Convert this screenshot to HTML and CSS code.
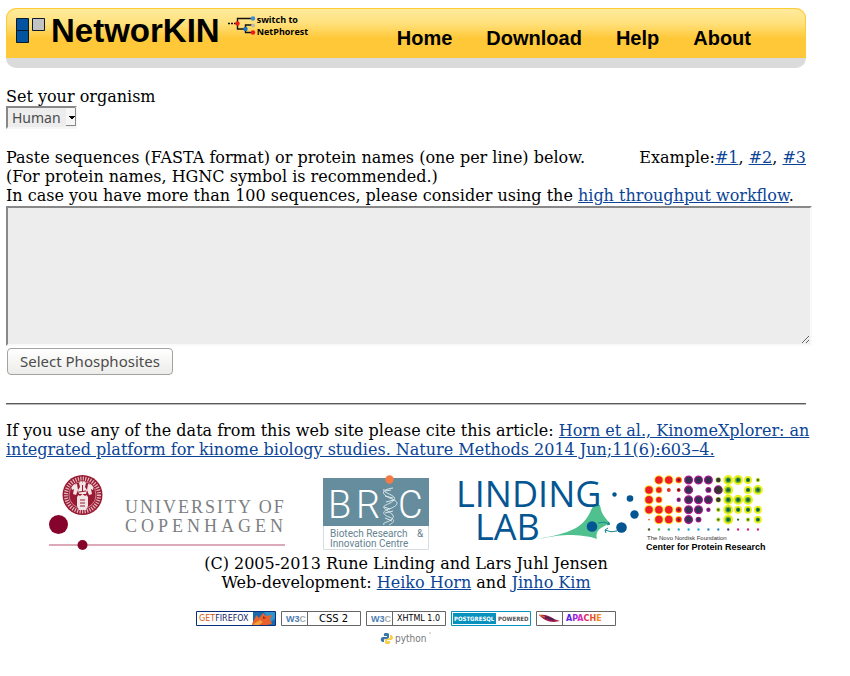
FILE: index.html
```html
<!DOCTYPE html>
<html lang="en">
<head>
<meta charset="utf-8">
<title>NetworKIN</title>
<link rel="stylesheet" href="styles.css">
</head>
<body>
<div class="page">
  <header class="banner">
    <a class="brand" href="#">
      <svg class="brand-mark" width="30" height="26" viewBox="0 0 30 26" aria-hidden="true">
        <g stroke="#0b1a2b"><path fill="#0354a0" d="M.5.5h12v12H.5zM.5 12.5h12v12H.5z"/><path fill="#c3c3c3" d="M16.5.5h12v12h-12z"/></g>
      </svg>
      <span>NetworKIN</span>
    </a>
    <a class="switch" href="#">
      <svg width="28" height="20" viewBox="0 0 28 20" aria-hidden="true">
        <path d="M0 7.5h8" stroke="#111" stroke-width="1.6" stroke-dasharray="2 1"/>
        <path d="M25 2.500H9.500V13H17M25 9h-7.500v7.500H25" fill="none" stroke="#111" stroke-width="1.400"/>
        <circle cx="9.500" cy="7.500" r="2.200" fill="#f01818"/><circle cx="25" cy="2.500" r="2.200" fill="#3a8fd8"/>
        <circle cx="25" cy="9.500" r="2" fill="#b9b9a8"/><circle cx="17.500" cy="13" r="2.200" fill="#1673cc"/>
        <circle cx="25" cy="16.500" r="2.200" fill="#f01818"/>
      </svg>
      <span>switch to<br>NetPhorest</span>
    </a>
    <nav class="menu">
      <a href="#">Home</a><a href="#">Download</a><a href="#">Help</a><a href="#">About</a>
    </nav>
  </header>

  <main>
    <form class="query">
      <label for="organism">Set your organism</label>
      <div class="picker">
        <select id="organism"><option>Human</option><option>Yeast</option></select>
      </div>
      <div class="intro">
        <label for="sequences">Paste sequences (FASTA format) or protein names (one per line) below.</label>
        <span>Example:<a href="#">#1</a>, <a href="#">#2</a>, <a href="#">#3</a></span>
      </div>
      <div>(For protein names, HGNC symbol is recommended.)</div>
      <div>In case you have more than 100 sequences, please consider using the <a href="#">high throughput workflow</a>.</div>
      <textarea id="sequences"></textarea>
      <button type="button">Select Phosphosites</button>
    </form>
    <hr>
    <p class="cite">If you use any of the data from this web site please cite this article: <a href="#">Horn et al., KinomeXplorer: an<br>integrated platform for kinome biology studies. Nature Methods 2014 Jun;11(6):603–4.</a></p>
  </main>

  <footer>
    <div class="logos">
      <svg width="256" height="80" viewBox="0 0 256 80" role="img" aria-label="University of Copenhagen">
        <path d="M1 72h236" stroke="#dba9b8" stroke-width="2"/>
        <circle cx="10.500" cy="51.500" r="9.500" fill="#86042b"/><circle cx="34.500" cy="72" r="5" fill="#86042b"/>
        <circle cx="34.500" cy="22" r="20" fill="#991a32"/>
        <circle cx="34.500" cy="22" r="16.500" fill="none" stroke="#e3b9bf" stroke-width="4" stroke-dasharray="1.200 1.300"/>
        <circle cx="34.500" cy="22" r="13.500" fill="#991a32" stroke="#e9cdd0" stroke-width=".6"/>
        <g fill="#f3e4e5">
          <path d="M29 24l1.500-2 1.500 1 2.500-2 2.500 2 1.500-1L40 24v9l-2 4h-7l-2-4z"/>
          <path d="M31 10l2-2 1.500 1.500L36 8l2 2-1 4 2 3-1 4h-7l-1-4 2-3z"/>
          <path d="M29 11c-4 0-6 3-5 6l2-1-1 5 3 1 2-5zM40 11c4 0 6 3 5 6l-2-1 1 5-3 1-2-5z"/>
        </g>
        <path d="M32 27h5M32 30h5M32 33h5M34.500 12v6M31 19l7-1" stroke="#991a32" stroke-width="1"/>
        <text class="ucph ucph-top" x="77" y="40">UNIVERSITY OF</text>
        <text class="ucph ucph-bottom" x="77" y="59">COPENHAGEN</text>
      </svg>
      <svg width="140" height="80" viewBox="0 0 140 80" role="img" aria-label="BRIC">
        <path d="M19.500 5.500h105v71h-105z" fill="#fff" stroke="#d5dfe2"/>
        <path d="M19 5h106v48H19z" fill="#668d9d"/>
        <circle cx="85.500" cy="6.500" r="4.200" fill="#f47b43"/>
        <g fill="none" stroke="#dce8eb" stroke-width="1">
          <path d="M89 15c-14 2-11 7-1 11s3 8-3 10-8 5 0 8 4 6 0 8"/>
          <path d="M80 16c-3 4 14 6 10 11s-14 5-9 9 11 6 7 10-10 3-8 6"/>
          <path d="M81 18l6-1M81 23l8 2M82 29l8-2M80 34l6 2M81 40l8-2M81 45l7 3"/>
        </g>
        <text class="bric" y="45"><tspan x="24">B</tspan><tspan x="52">R</tspan><tspan x="94">C</tspan></text>
        <text class="bric-sub" y="64"><tspan x="26">Biotech Research</tspan><tspan x="113">&amp;</tspan></text>
        <text class="bric-sub" x="26" y="74">Innovation Centre</text>
      </svg>
      <svg width="197" height="80" viewBox="0 0 197 80" role="img" aria-label="Linding Lab">
        <path d="M92 66c25-4 41-8 50-20 5-6 5-12 9-14h5c1 6 2 10 10 18l-9 5c-5 3-5 8-4 11-8-3-18-4-29-4-12 0-21 3-32 4z" fill="#50c18e"/>
        <g fill="#045693"><circle cx="148" cy="53.500" r="5.300"/><circle cx="177.500" cy="54.500" r="5.300"/><circle cx="190.500" cy="41.500" r="4.200"/><circle cx="186" cy="25.500" r="3.300"/><circle cx="170.500" cy="21.500" r="2.200"/></g>
        <path d="M154 50q6-2 12 1m-2-2l2 2-3 1M173 58q-6 2-12-1m3-2l-3 2 1 3" fill="none" stroke="#178a91"/>
        <text class="lab" x="12" y="34">LINDING</text>
        <text class="lab" x="31" y="67">LAB</text>
      </svg>
      <svg width="124" height="80" viewBox="0 0 124 80" role="img" aria-label="Center for Protein Research">
        <!-- One unit per dot column; each zero-length segment draws a round dot. -->
        <g transform="translate(8 7) scale(9.900)" fill="none" stroke-linecap="round">
          <path stroke="#fbe52c" stroke-width=".96" d="M1 0h0M2 0h0M0 1h0M0 2h0M0 3h0M1 3h0M2 3h0M1 4h0M2 4h0"/>
          <path stroke="#ee1c25" stroke-width=".76" d="M1 0h0M2 0h0M0 1h0M0 2h0M0 3h0M1 3h0M2 3h0M1 4h0M2 4h0"/>
          <path stroke="#fbd52c" stroke-width=".72" d="M3 0h0M1 1h0M1 2h0M3 3h0M3 4h0"/>
          <path stroke="#ee1c25" stroke-width=".56" d="M3 0h0M1 1h0M1 2h0M3 3h0M3 4h0"/>
          <path stroke="#e4322b" stroke-width=".4" d="M2 1h0M3 1h0"/>
          <path stroke="#5b1a2b" stroke-width=".24" d="M3 0h0M3 1h0M3 3h0M3 4h0"/>
          <path stroke="#b01b94" stroke-width=".92" d="M4 0h0M5 0h0M6 0h0M4 1h0M4 2h0M5 2h0M6 2h0M4 3h0M5 3h0M4 4h0M7 1h0"/>
          <path stroke="#343250" stroke-width=".66" d="M4 0h0M5 0h0M6 0h0M4 1h0M4 2h0M5 2h0M6 2h0M4 3h0M5 3h0M4 4h0"/>
          <path stroke="#b01b94" stroke-width=".6" d="M6 1h0M5 4h0"/>
          <path stroke="#b01b94" stroke-width=".44" d="M3 2h0M6 3h0"/>
          <path stroke="#343250" stroke-width=".4" d="M6 1h0M5 4h0"/>
          <path stroke="#343250" stroke-width=".24" d="M3 2h0M6 3h0"/>
          <path stroke="#343434" stroke-width=".74" d="M7 1h0"/>
          <path stroke="#b8c62b" stroke-width=".56" d="M7 0h0M7 2h0"/>
          <path stroke="#343434" stroke-width=".44" d="M7 0h0M7 2h0"/>
          <path stroke="#e9f01c" stroke-width="1" d="M8 0h0M9 0h0M8 1h0M11 1h0M8 2h0M9 2h0M10 2h0M8 3h0M8 4h0"/>
          <path stroke="#e9f01c" stroke-width=".8" d="M10 0h0M10 1h0M9 3h0M10 3h0M11 3h0M11 4h0"/>
          <path stroke="#58a834" stroke-width=".58" d="M8 0h0M9 0h0M8 1h0M11 1h0M8 2h0M9 2h0M10 2h0M8 3h0M8 4h0"/>
          <path stroke="#58a834" stroke-width=".44" d="M10 0h0M10 1h0M9 3h0M10 3h0M11 3h0M11 4h0"/>
          <path stroke="#135e4b" stroke-width=".34" d="M8 0h0M9 0h0M10 0h0M8 1h0M10 1h0M11 1h0M8 2h0M9 2h0M10 2h0M8 3h0M9 3h0M10 3h0M11 3h0M8 4h0M11 4h0"/>
          <path stroke="#c8de2b" stroke-width=".44" d="M11 0h0M7 3h0M7 4h0M10 4h0"/>
          <path stroke="#32702d" stroke-width=".24" d="M11 0h0M7 3h0M7 4h0M10 4h0M9 4h0"/>
          <path stroke="#e8622b" stroke-width=".18" d="M0 4h0"/>
          <g stroke-width=".24">
            <path stroke="#5a5420" d="M0 5h0"/><path stroke="#52b23c" d="M1 5h0"/><path stroke="#19a878" d="M2 5h0"/>
            <path stroke="#22a7d6" d="M3 5h0M4 5h0M5 5h0"/><path stroke="#2886c6" d="M6 5h0M7 5h0"/>
            <path stroke="#473a8f" d="M8 5h0"/><path stroke="#dc1d84" d="M9 5h0M10 5h0M11 5h0"/>
          </g>
        </g>
        <text class="cpr" x="6" y="67">The Novo Nordisk Foundation</text>
        <text class="cpr-name" x="5" y="77">Center for Protein Research</text>
      </svg>
    </div>
    <div>(C) 2005-2013 Rune Linding and Lars Juhl Jensen</div>
    <div>Web-development: <a href="#">Heiko Horn</a> and <a href="#">Jinho Kim</a></div>

    <div class="badges">
      <a href="#"><svg width="80" height="15" viewBox="0 0 80 15">
        <path d="M.5.5h79v14H.5z" fill="#fff" stroke="#0a2d7a"/>
        <path d="M57 1h22v13H57z" fill="#1769ad"/><path d="M68 1h11v7l-6 4z" fill="#2f93cc"/>
        <path d="M56 14c1-5 3-5 4-10l3 3 4-5 3 3 6-1-2 4 2 5-5 1z" fill="#e8602b"/><path d="M57 14c2-3 5-3 7-5l3 2-4 3z" fill="#f4a13c"/><path d="M67 5l3 2-3 1z" fill="#8e301a"/>
        <text class="pixel" x="3" y="10"><tspan fill="#d95a10">GET</tspan><tspan fill="#15246c">FIREFOX</tspan></text></svg></a>
      <a href="#"><svg width="80" height="15" viewBox="0 0 80 15">
        <path d="M.5.5h79v14H.5zM26.500 0v15" fill="#fff" stroke="#666"/>
        <text class="w3" x="5" y="11">W3<tspan fill="#aaa">C</tspan></text>
        <text class="pixel-wide" x="38" y="11">CSS 2</text></svg></a>
      <a href="#"><svg width="80" height="15" viewBox="0 0 80 15">
        <path d="M.5.5h79v14H.5zM26.500 0v15" fill="#fff" stroke="#666"/>
        <text class="w3" x="5" y="11">W3<tspan fill="#aaa">C</tspan></text>
        <text class="pixel" x="31" y="10">XHTML 1.0</text></svg></a>
      <a href="#"><svg width="80" height="15" viewBox="0 0 80 15">
        <path d="M.5.5h79v14H.5z" fill="#fff" stroke="#0792bd"/><path d="M2 2h43v11H2z" fill="#0792bd"/>
        <text class="pixel-mini" x="3" y="10" fill="#fff">POSTGRESQL</text>
        <text class="pixel-mini" x="47" y="10" fill="#555">POWERED</text></svg></a>
      <a href="#"><svg width="80" height="15" viewBox="0 0 80 15">
        <path d="M.5.5h79v14H.5zM26.500 0v15" fill="#fff" stroke="#666"/>
        <path d="M3 4c6-1 11 1 15 4l6 2-6 1C11 11 7 8 3 4z" fill="#a51e46"/><path d="M9 6l9 3" stroke="#4b2259" stroke-width="2"/><path d="M3 4l6 2" stroke="#e0702a"/>
        <text class="pixel pixel-bold" x="30" y="10"><tspan fill="#5a24dc">A</tspan><tspan fill="#9d25dc">P</tspan><tspan fill="#dc25bd">A</tspan><tspan fill="#e0255f">C</tspan><tspan fill="#e8502a">H</tspan><tspan fill="#f28a1e">E</tspan></text></svg></a>
    </div>
    <a class="python" href="#"><svg width="52" height="15" viewBox="0 0 52 15">
      <path d="M6 2c-3 0-2 2-2 3h3v1H3c-3 0-3 5 0 5h1V9c0-2 5 0 5-3V3c0-1-2-1-3-1z" fill="#3b76aa"/>
      <path d="M8 13c3 0 2-2 2-3H7V9h4c3 0 2-5 0-5h-1v2c0 3-5 1-5 3v3c0 1 2 1 3 1z" fill="#fbcf45"/>
      <text x="15" y="11">python</text><path d="M49 2h2" stroke="#bbb"/></svg></a>
  </footer>
</div>
</body>
</html>
```

FILE: styles.css
```css
body {
  margin: 8px 6px;
  background: #fff;
  color: #000;
  font: 16px/19px "DejaVu Serif", serif;
}

a {
  color: #0b4496;
}

.page {
  max-width: 800px;
}

svg {
  display: block;
  overflow: visible;
}

/* Banner */
.banner {
  display: flex;
  align-items: flex-start;
  box-sizing: border-box;
  height: 60px;
  padding: 0 55px 0 10px;
  border-top: 1px solid #ffcb35;
  border-bottom: 10px solid #dbdbdb;
  border-radius: 10px;
  background: linear-gradient(#ffeb9e, #ffe07a 30%, #ffc838 60%, #ffc838);
  box-shadow: inset 1px 0 #ffcb35, inset -1px 0 #ffcb35;
}

.banner a {
  color: #000;
  text-decoration: none;
}

.brand {
  display: flex;
  gap: 5px;
  font: bold 33px/44px "Liberation Sans", sans-serif;
}

.brand-mark {
  margin-top: 9px;
}

.switch {
  display: flex;
  gap: 1px;
  margin: 5px 0 0 8px;
  font: bold 9px/12px "Open Sans", sans-serif;
}

.switch svg {
  margin-top: 2px;
}

.menu {
  display: flex;
  gap: 34px;
  margin-left: auto;
  font: bold 20px/58px "Liberation Sans", sans-serif;
}

/* Query form */
.query {
  margin-top: 19px;
}

.query label {
  display: block;
}

.picker {
  position: relative;
  width: 71px;
  margin-bottom: 19px;
}

.picker::after {
  content: "";
  position: absolute;
  top: 2px;
  right: 1px;
  box-sizing: border-box;
  width: 10px;
  height: 18px;
  border: solid #888;
  border-width: 0 1px 1px 0;
  background: linear-gradient(#000, #000) 3px 8px / 6px 1px no-repeat,
    linear-gradient(#000, #000) 4px 9px / 4px 1px no-repeat,
    linear-gradient(#000, #000) 5px 10px / 2px 1px no-repeat, #f6f6f6;
  pointer-events: none;
}

select {
  display: block;
  appearance: none;
  box-sizing: border-box;
  width: 100%;
  height: 23px;
  padding: 0 4px;
  border: 2px solid;
  border-color: #888 #f6f6f6 #f6f6f6 #888;
  border-radius: 0;
  background: #ededed;
  color: #4c4c4c;
  font: 14px/19px "Noto Sans", sans-serif;
}

.intro {
  display: flex;
  justify-content: space-between;
}

textarea {
  display: block;
  box-sizing: border-box;
  width: calc(100% + 6px);
  height: 140px;
  margin-top: 1px;
  border: 2px solid;
  border-color: #888 #f9f9f9 #f9f9f9 #888;
  background: #ededed;
}

button {
  display: block;
  height: 27px;
  margin: 2px 0 0 1px;
  padding: 0 12px;
  border: 1px solid #a3a3a3;
  border-radius: 4px;
  background: linear-gradient(#fff, #ececea);
  color: #4c4c4c;
  font: 15px/23px "Noto Sans", sans-serif;
}

hr {
  height: 1px;
  margin: 28px 0 16px;
  border: 0;
  border-bottom: 1px solid #b9b9b9;
  background: #5a5a5a;
}

.cite {
  margin: 0 -16px 0 0;
}

/* Footer */
footer {
  text-align: center;
}

.logos {
  display: flex;
  justify-content: center;
  margin: 14px 0 1px;
}

.logos text {
  text-anchor: start;
}

.ucph {
  fill: #7d7f83;
  font: 18px "Liberation Serif", serif;
}

.ucph-top {
  letter-spacing: 2px;
}

.ucph-bottom {
  letter-spacing: 4px;
}

.bric {
  fill: #fff;
  font: 300 38px Roboto, sans-serif;
}

.bric-sub {
  fill: #668491;
  font: 10px Roboto, sans-serif;
}

.lab {
  fill: #045693;
  font: 36px "Open Sans", sans-serif;
}

.cpr {
  fill: #333;
  font: 6px "Liberation Sans", sans-serif;
}

.cpr-name {
  fill: #000;
  font: bold 9px "Liberation Sans", sans-serif;
}

.badges {
  display: flex;
  justify-content: center;
  gap: 5px;
  margin: 19px 0 5px;
}

.pixel {
  font: 8px "DejaVu Sans", sans-serif;
}

.pixel-bold {
  font-weight: bold;
}

.pixel-wide {
  font: 10px "DejaVu Sans", sans-serif;
}

.pixel-mini {
  font: bold 6px "DejaVu Sans Condensed", "Liberation Sans", sans-serif;
}

.w3 {
  fill: #4a7db5;
  font: bold 9px "Liberation Sans", sans-serif;
}

.python {
  display: inline-block;
}

.python text {
  fill: #777;
  font: 10px "DejaVu Sans Condensed", "Liberation Sans", sans-serif;
}
```
